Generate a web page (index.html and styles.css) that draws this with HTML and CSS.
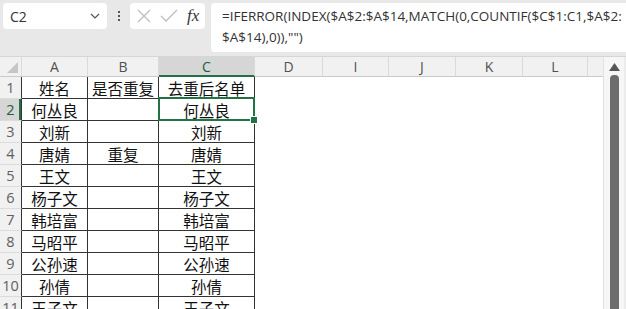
FILE: index.html
```html
<!DOCTYPE html>
<html lang="zh">
<head>
  <meta charset="UTF-8" />
  <title>去重后名单</title>
  <link rel="stylesheet" href="styles.css">
</head>
<body>
  <div class="toolbar">
    <div class="namebox">
      <span>C2</span>
      <svg class="chev" width="10" height="6" viewBox="0 0 10 6"><path d="M1 1l4 4 4-4" fill="none" stroke="#555" stroke-width="1.2"/></svg>
    </div>
    <div class="dots"><i></i><i></i><i></i></div>
    <div class="fxbox">
      <svg width="16" height="16" viewBox="0 0 16 16"><path d="M2 2l12 12M14 2L2 14" stroke="#bdbdbd" stroke-width="1.3"/></svg>
      <svg width="18" height="16" viewBox="0 0 18 16"><path d="M1 8l5 5L17 2" fill="none" stroke="#bdbdbd" stroke-width="1.3"/></svg>
      <span class="fx">fx</span>
    </div>
    <div class="formula">=IFERROR(INDEX($A$2:$A$14,MATCH(0,COUNTIF($C$1:C1,$A$2:<br>$A$14),0)),"")</div>
  </div>

  <div class="sheet">
    <div class="grid">
      <div class="hd corner"><span class="tri"></span></div>
      <div class="hd">A</div>
      <div class="hd">B</div>
      <div class="hd active">C</div>
      <div class="hd">D</div>
      <div class="hd">I</div>
      <div class="hd">J</div>
      <div class="hd">K</div>
      <div class="hd">L</div>
      <div class="hd last"></div>
    </div>
    <div class="scroll">
      <svg class="up" width="11" height="8" viewBox="0 0 11 8"><path d="M0 8L5.5 0 11 8z" fill="#555"/></svg>
      <div class="thumb"></div>
    </div>
  </div>

  <script>
    var names = ["何丛良","刘新","唐婧","王文","杨子文","韩培富","马昭平","公孙速","孙倩","王子文"];
    var grid = document.querySelector(".grid");
    var rows = [["姓名","是否重复","去重后名单"]];
    names.forEach(function (n, i) {
      rows.push([n, i === 2 ? "重复" : "", n]);
    });
    rows.forEach(function (r, i) {
      var html = '<div class="rh' + (i === 1 ? ' active' : '') + '">' + (i + 1) + '</div>';
      html += '<div class="cell">' + r[0] + '</div>';
      html += '<div class="cell">' + r[1] + '</div>';
      html += '<div class="cell' + (i === 1 ? ' sel' : '') + '">' + r[2] + '</div>';
      html += '<div class="blank"></div>'.repeat(6);
      grid.insertAdjacentHTML("beforeend", html);
    });
  </script>
</body>
</html>
```

FILE: styles.css
```css
* {
  box-sizing: border-box;
}

body {
  margin: 0;
  width: 626px;
  height: 309px;
  overflow: hidden;
  background: #e8e8e9;
  font-family: "Noto Sans CJK SC", sans-serif;
  color: #222;
}

.toolbar {
  display: flex;
  align-items: flex-start;
  height: 56px;
  padding: 3px 0 0 3px;
  background: #e8e8e9;
}

.namebox {
  width: 104px;
  height: 26px;
  background: #fff;
  border-radius: 4px;
  display: flex;
  align-items: center;
  justify-content: space-between;
  padding: 0 7px 0 7px;
  font-family: "Open Sans", sans-serif;
  font-size: 14px;
  color: #333;
}

.dots {
  width: 23px;
  height: 26px;
  display: flex;
  flex-direction: column;
  align-items: center;
  justify-content: center;
  gap: 2px;
}

.dots i {
  width: 2px;
  height: 2px;
  background: #555;
}

.fxbox {
  width: 75px;
  height: 26px;
  background: #fff;
  border-radius: 4px;
  display: flex;
  align-items: center;
  gap: 8px;
  padding-left: 6px;
}

.fx {
  font-family: "Liberation Serif", serif;
  font-style: italic;
  font-size: 17px;
  color: #333;
  margin-left: 1px;
}

.formula {
  flex: 1;
  height: 49px;
  margin-left: 6px;
  background: #fff;
  border-radius: 4px 0 0 4px;
  padding: 3px 0 0 11px;
  font-family: "Open Sans", sans-serif;
  font-size: 13.5px;
  line-height: 21px;
  color: #333;
  white-space: nowrap;
  overflow: hidden;
}

.sheet {
  display: flex;
  background: #fff;
  border-top: 1px solid #d6d6d6;
}

.grid {
  width: 603px;
  display: grid;
  grid-template-columns: 22px 66px 71px 96px 68px 66px 67px 67px 65px 15px;
  grid-template-rows: 20px;
  grid-auto-rows: 22px;
}

.hd {
  background: #f1f1f1;
  border-right: 1px solid #dadada;
  border-bottom: 1px solid #c9c9c9;
  font-family: "Open Sans", sans-serif;
  font-size: 14px;
  color: #505050;
  display: flex;
  align-items: center;
  justify-content: center;
}

.hd.last {
  border-right: none;
}

.hd.active {
  background: #d6d6d6;
  border-bottom: 2px solid #217346;
  color: #1d5e38;
}

.corner {
  position: relative;
}

.tri {
  position: absolute;
  right: 3px;
  bottom: 3px;
  width: 0;
  height: 0;
  border-left: 11px solid transparent;
  border-bottom: 11px solid #c6c6c6;
}

.rh {
  background: #f1f1f1;
  border-right: 1px solid #333;
  border-bottom: 1px solid #dcdcdc;
  font-family: "Open Sans", sans-serif;
  font-size: 14.5px;
  color: #606060;
  display: flex;
  align-items: center;
  justify-content: center;
}

.rh.active {
  background: #d6d6d6;
  color: #1d5e38;
  box-shadow: inset -2px 0 0 #217346;
}

.cell {
  border-right: 1px solid #333;
  border-bottom: 1px solid #333;
  font-size: 15.5px;
  color: #111;
  display: flex;
  align-items: center;
  justify-content: center;
}

.cell.sel {
  position: relative;
}

.cell.sel::after {
  content: "";
  position: absolute;
  left: -1px;
  top: -2px;
  right: -1px;
  bottom: -1px;
  border: 2px solid #217346;
}

.cell.sel::before {
  content: "";
  position: absolute;
  right: -4px;
  bottom: -4px;
  width: 6px;
  height: 6px;
  background: #217346;
  border: 1px solid #fff;
  z-index: 1;
}

.scroll {
  width: 23px;
  height: 260px;
  background: #f6f6f6;
  border-left: 1px solid #e2e2e2;
  border-right: 2px solid #ececec;
  display: flex;
  flex-direction: column;
  align-items: center;
  padding-top: 6px;
  gap: 4px;
}

.up {
  display: block;
  flex-shrink: 0;
}

.thumb {
  width: 9px;
  flex: 1;
  background: #6c6c6c;
  border-radius: 4px 4px 0 0;
}
```
